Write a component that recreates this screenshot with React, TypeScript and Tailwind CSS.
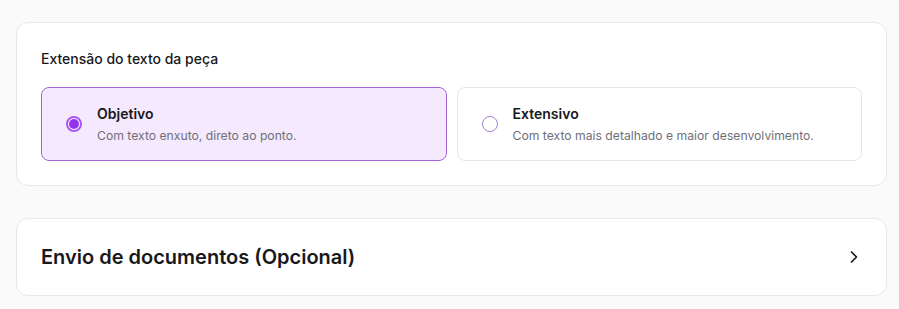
import { ChevronRight } from 'lucide-react';

type Option = { id: string; title: string; description: string };

const options: Option[] = [
  { id: 'objetivo', title: 'Objetivo', description: 'Com texto enxuto, direto ao ponto.' },
  { id: 'extensivo', title: 'Extensivo', description: 'Com texto mais detalhado e maior desenvolvimento.' },
];

export default function App() {
  const selected = 'objetivo';

  return (
    <div className="min-h-screen bg-[#fafafa] pl-4 pr-3 pt-[22px] pb-4 font-['Inter',sans-serif]">
      {/* Extensão */}
      <section className="rounded-xl border border-[#e8e8ea] bg-white px-6 pt-[26px] pb-6">
        <p className="mb-[18px] text-sm leading-5 font-medium text-[#18181b]">Extensão do texto da peça</p>
        <div className="grid grid-cols-2 gap-2.5">
          {options.map((opt) => {
            const active = opt.id === selected;
            return (
              <div
                key={opt.id}
                className={
                  active
                    ? 'flex items-center gap-[15px] rounded-lg border border-[#a465d6] bg-[#f4e9fd] py-4 pl-6 pr-4'
                    : 'flex items-center gap-[15px] rounded-lg border border-[#e6e6e9] bg-white py-4 pl-6 pr-4'
                }
              >
                <span
                  className={
                    active
                      ? 'flex h-4 w-4 shrink-0 items-center justify-center rounded-full border-2 border-[#a855f7] bg-white'
                      : 'flex h-4 w-4 shrink-0 items-center justify-center rounded-full border-[1.5px] border-[#a47fd6] bg-white'
                  }
                >
                  {active && <span className="h-2.5 w-2.5 rounded-full bg-[#9333ea]" />}
                </span>
                <div>
                  <p className="text-sm leading-5 font-semibold text-[#18181b]">{opt.title}</p>
                  <p className="mt-1 text-[12.2px] leading-4 text-[#6f6f7a]">{opt.description}</p>
                </div>
              </div>
            );
          })}
        </div>
      </section>

      {/* Envio de documentos */}
      <section className="mt-8 flex items-center justify-between rounded-xl border border-[#e8e8ea] bg-white py-6 pl-6 pr-[22px]">
        <h2 className="text-xl leading-7 font-semibold text-[#18181b]">Envio de documentos (Opcional)</h2>
        <ChevronRight size={20} strokeWidth={2} className="text-[#18181b]" />
      </section>
    </div>
  );
}
